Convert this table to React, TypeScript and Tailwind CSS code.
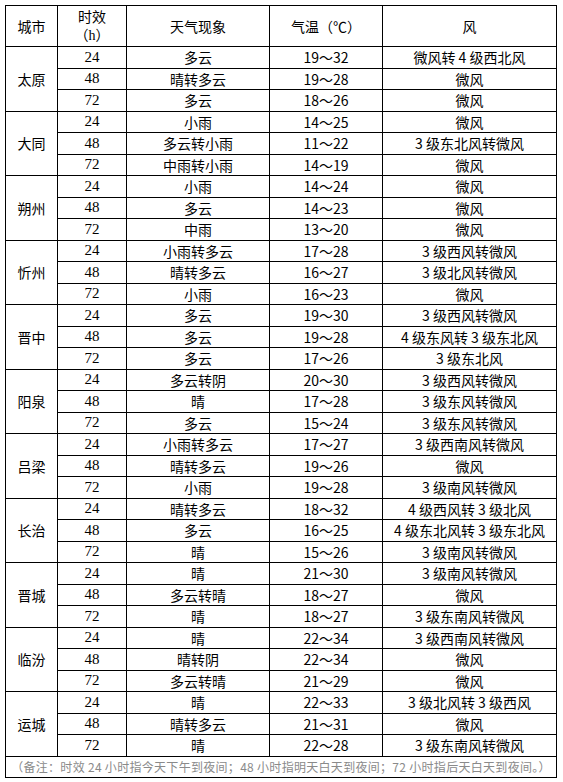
type Row = [string, string, string, string];

const cities: { name: string; rows: Row[] }[] = [
  {
    name: '太原',
    rows: [
      ['24', '多云', '19～32', '微风转 4 级西北风'],
      ['48', '晴转多云', '19～28', '微风'],
      ['72', '多云', '18～26', '微风'],
    ],
  },
  {
    name: '大同',
    rows: [
      ['24', '小雨', '14～25', '微风'],
      ['48', '多云转小雨', '11～22', '3 级东北风转微风'],
      ['72', '中雨转小雨', '14～19', '微风'],
    ],
  },
  {
    name: '朔州',
    rows: [
      ['24', '小雨', '14～24', '微风'],
      ['48', '多云', '14～23', '微风'],
      ['72', '中雨', '13～20', '微风'],
    ],
  },
  {
    name: '忻州',
    rows: [
      ['24', '小雨转多云', '17～28', '3 级西风转微风'],
      ['48', '晴转多云', '16～27', '3 级北风转微风'],
      ['72', '小雨', '16～23', '微风'],
    ],
  },
  {
    name: '晋中',
    rows: [
      ['24', '多云', '19～30', '3 级西风转微风'],
      ['48', '多云', '19～28', '4 级东风转 3 级东北风'],
      ['72', '多云', '17～26', '3 级东北风'],
    ],
  },
  {
    name: '阳泉',
    rows: [
      ['24', '多云转阴', '20～30', '3 级西风转微风'],
      ['48', '晴', '17～28', '3 级东风转微风'],
      ['72', '多云', '15～24', '3 级东风转微风'],
    ],
  },
  {
    name: '吕梁',
    rows: [
      ['24', '小雨转多云', '17～27', '3 级西南风转微风'],
      ['48', '晴转多云', '19～26', '微风'],
      ['72', '小雨', '19～28', '3 级南风转微风'],
    ],
  },
  {
    name: '长治',
    rows: [
      ['24', '晴转多云', '18～32', '4 级西风转 3 级北风'],
      ['48', '多云', '16～25', '4 级东北风转 3 级东北风'],
      ['72', '晴', '15～26', '3 级南风转微风'],
    ],
  },
  {
    name: '晋城',
    rows: [
      ['24', '晴', '21～30', '3 级南风转微风'],
      ['48', '多云转晴', '18～27', '微风'],
      ['72', '晴', '18～27', '3 级东南风转微风'],
    ],
  },
  {
    name: '临汾',
    rows: [
      ['24', '晴', '22～34', '3 级西南风转微风'],
      ['48', '晴转阴', '22～34', '微风'],
      ['72', '多云转晴', '21～29', '微风'],
    ],
  },
  {
    name: '运城',
    rows: [
      ['24', '晴', '22～33', '3 级北风转 3 级西风'],
      ['48', '晴转多云', '21～31', '微风'],
      ['72', '晴', '22～28', '3 级东南风转微风'],
    ],
  },
];

const cell = 'border border-black text-center align-middle p-0 leading-none';

export default function App() {
  return (
    <div className="min-h-screen bg-white pl-[5px] pt-[5px] text-[14px] text-black [font-family:'Noto_Sans_CJK_SC','Liberation_Sans',sans-serif]">
      <table className="w-[551px] table-fixed border-collapse">
        <colgroup>
          <col className="w-[52px]" />
          <col className="w-[69px]" />
          <col className="w-[143px]" />
          <col className="w-[113px]" />
          <col className="w-[174px]" />
        </colgroup>
        <thead>
          <tr className="h-[41px]">
            <th className={`${cell} font-normal`}>城市</th>
            <th className={`${cell} font-normal`}>
              <div className="flex flex-col items-center gap-[4px]">
                <span>时效</span>
                <span>
                  （<span className="[font-family:'Liberation_Serif',serif]">h</span>）
                </span>
              </div>
            </th>
            <th className={`${cell} font-normal`}>天气现象</th>
            <th className={`${cell} font-normal`}>气温（℃）</th>
            <th className={`${cell} font-normal`}>风</th>
          </tr>
        </thead>
        <tbody>
          {cities.map((city) =>
            city.rows.map((row, i) => (
              <tr key={city.name + row[0]} className="h-[21.5px]">
                {i === 0 && (
                  <td rowSpan={3} className={cell}>
                    {city.name}
                  </td>
                )}
                <td className={`${cell} [font-family:'Liberation_Serif',serif] text-[15px]`}>{row[0]}</td>
                <td className={cell}>{row[1]}</td>
                <td className={cell}>{row[2]}</td>
                <td className={cell}>{row[3]}</td>
              </tr>
            )),
          )}
          <tr className="h-[21px]">
            <td colSpan={5} className={`${cell} whitespace-nowrap text-[12px] tracking-[0.3px] text-[#8a8a8a]`}>
              （备注：时效 24 小时指今天下午到夜间；48 小时指明天白天到夜间；72 小时指后天白天到夜间。）
            </td>
          </tr>
        </tbody>
      </table>
    </div>
  );
}
